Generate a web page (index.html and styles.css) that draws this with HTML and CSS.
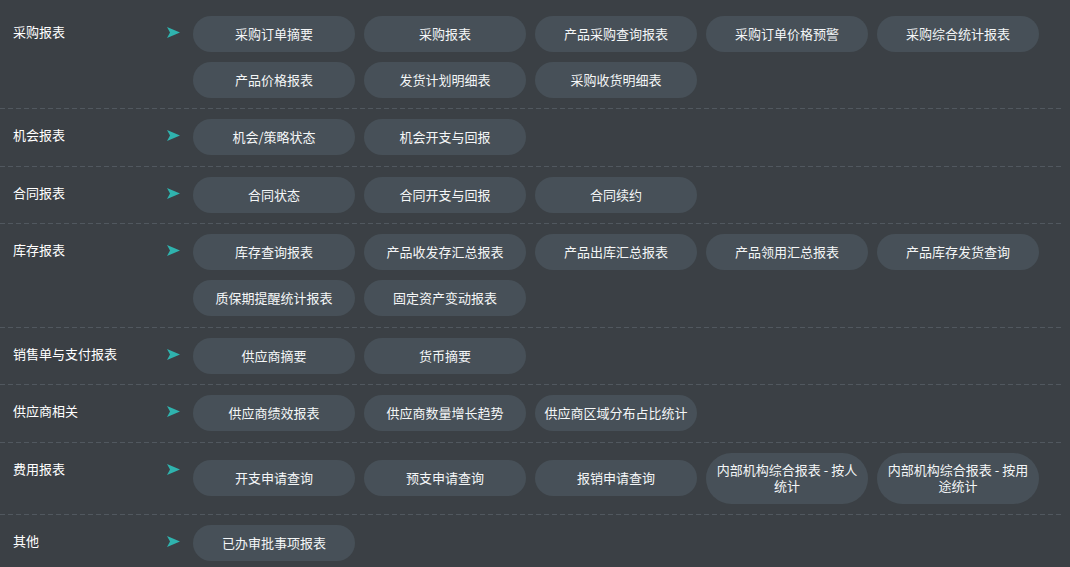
FILE: index.html
```html
<!DOCTYPE html>
<html lang="zh-CN">
<head>
<meta charset="utf-8">
<title>报表</title>
<link rel="stylesheet" href="styles.css">
</head>
<body>
<div class="report-list">
  <div class="section">
    <div class="label">采购报表</div>
    <svg class="arrow" viewBox="0 0 13 11" width="13" height="11"><path d="M0 0 L13 5.5 L0 11 L3 5.5 Z"/></svg>
    <div class="items">
      <a class="item">采购订单摘要</a>
      <a class="item">采购报表</a>
      <a class="item">产品采购查询报表</a>
      <a class="item">采购订单价格预警</a>
      <a class="item">采购综合统计报表</a>
      <a class="item">产品价格报表</a>
      <a class="item">发货计划明细表</a>
      <a class="item">采购收货明细表</a>
    </div>
  </div>
  <div class="section">
    <div class="label">机会报表</div>
    <svg class="arrow" viewBox="0 0 13 11" width="13" height="11"><path d="M0 0 L13 5.5 L0 11 L3 5.5 Z"/></svg>
    <div class="items">
      <a class="item">机会/策略状态</a>
      <a class="item">机会开支与回报</a>
    </div>
  </div>
  <div class="section">
    <div class="label">合同报表</div>
    <svg class="arrow" viewBox="0 0 13 11" width="13" height="11"><path d="M0 0 L13 5.5 L0 11 L3 5.5 Z"/></svg>
    <div class="items">
      <a class="item">合同状态</a>
      <a class="item">合同开支与回报</a>
      <a class="item">合同续约</a>
    </div>
  </div>
  <div class="section">
    <div class="label">库存报表</div>
    <svg class="arrow" viewBox="0 0 13 11" width="13" height="11"><path d="M0 0 L13 5.5 L0 11 L3 5.5 Z"/></svg>
    <div class="items">
      <a class="item">库存查询报表</a>
      <a class="item">产品收发存汇总报表</a>
      <a class="item">产品出库汇总报表</a>
      <a class="item">产品领用汇总报表</a>
      <a class="item">产品库存发货查询</a>
      <a class="item">质保期提醒统计报表</a>
      <a class="item">固定资产变动报表</a>
    </div>
  </div>
  <div class="section">
    <div class="label">销售单与支付报表</div>
    <svg class="arrow" viewBox="0 0 13 11" width="13" height="11"><path d="M0 0 L13 5.5 L0 11 L3 5.5 Z"/></svg>
    <div class="items">
      <a class="item">供应商摘要</a>
      <a class="item">货币摘要</a>
    </div>
  </div>
  <div class="section">
    <div class="label">供应商相关</div>
    <svg class="arrow" viewBox="0 0 13 11" width="13" height="11"><path d="M0 0 L13 5.5 L0 11 L3 5.5 Z"/></svg>
    <div class="items">
      <a class="item">供应商绩效报表</a>
      <a class="item">供应商数量增长趋势</a>
      <a class="item">供应商区域分布占比统计</a>
    </div>
  </div>
  <div class="section">
    <div class="label">费用报表</div>
    <svg class="arrow" viewBox="0 0 13 11" width="13" height="11"><path d="M0 0 L13 5.5 L0 11 L3 5.5 Z"/></svg>
    <div class="items">
      <a class="item">开支申请查询</a>
      <a class="item">预支申请查询</a>
      <a class="item">报销申请查询</a>
      <a class="item">内部机构综合报表 - 按人统计</a>
      <a class="item">内部机构综合报表 - 按用途统计</a>
    </div>
  </div>
  <div class="section">
    <div class="label">其他</div>
    <svg class="arrow" viewBox="0 0 13 11" width="13" height="11"><path d="M0 0 L13 5.5 L0 11 L3 5.5 Z"/></svg>
    <div class="items">
      <a class="item">已办审批事项报表</a>
    </div>
  </div>
</div>
</body>
</html>
```
FILE: styles.css
```css
html, body {
  margin: 0;
  padding: 0;
  background: #3b4045;
}
body {
  font-family: "Noto Sans CJK SC", "Noto Sans", sans-serif;
  font-size: 13px;
  color: #ffffff;
}
.report-list {
  width: 1062px;
  padding-top: 5.5px;
}
.section {
  display: flex;
  align-items: flex-start;
  padding: 10px 0 11.5px 13px;
  background-image: repeating-linear-gradient(to right, #51585f 0 5px, transparent 5px 8px);
  background-size: 100% 1px;
  background-position: left bottom;
  background-repeat: no-repeat;
}
.label {
  width: 154px;
  flex: none;
  margin-top: 8px;
  line-height: 16px;
  color: #ffffff;
}
.arrow {
  flex: none;
  margin-top: 11px;
  margin-right: 13px;
  fill: #2fb3ae;
}
.items {
  display: flex;
  flex-wrap: wrap;
  align-items: center;
  gap: 10px 9px;
  width: 869px;
}
.item {
  box-sizing: border-box;
  width: 162px;
  min-height: 36px;
  padding: 9.5px 9px;
  border-radius: 26px;
  background: #475058;
  color: #f4f6f7;
  line-height: 16px;
  text-align: center;
  display: flex;
  align-items: center;
  justify-content: center;
  cursor: pointer;
}
```
